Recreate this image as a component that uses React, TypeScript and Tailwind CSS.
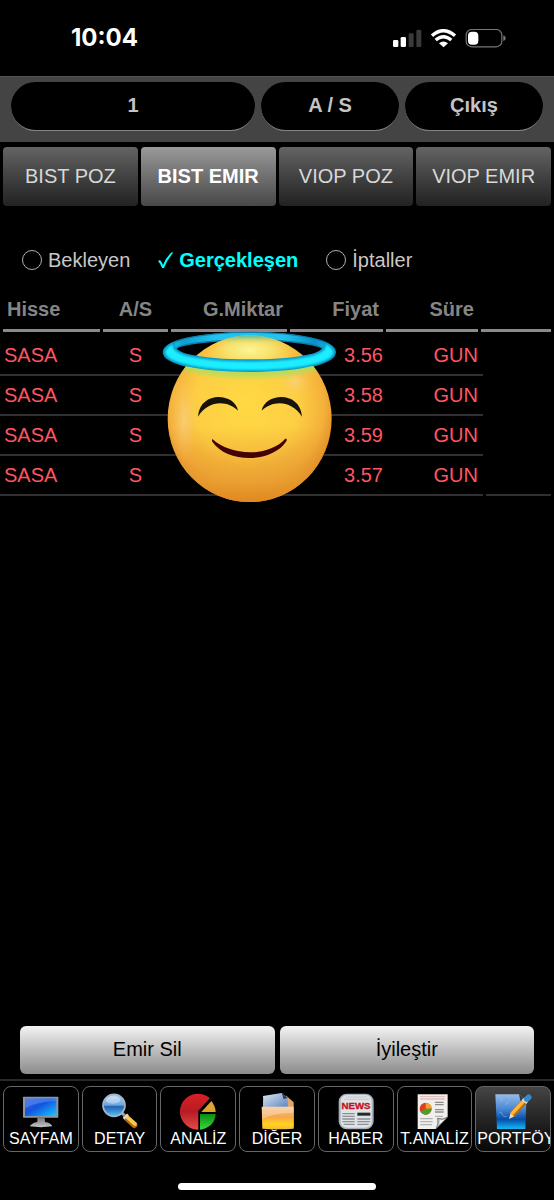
import * as React from "react"
import clsx from "clsx"

const tabs = ["BIST POZ", "BIST EMIR", "VIOP POZ", "VIOP EMIR"]
const filters = ["Bekleyen", "Gerçekleşen", "İptaller"]
const orders = [
    { hisse: "SASA", side: "S", fiyat: "3.56", sure: "GUN" },
    { hisse: "SASA", side: "S", fiyat: "3.58", sure: "GUN" },
    { hisse: "SASA", side: "S", fiyat: "3.59", sure: "GUN" },
    { hisse: "SASA", side: "S", fiyat: "3.57", sure: "GUN" },
]

function StatusIcons() {
    return (
        <svg viewBox="348 84 339 57" className="h-[19px] w-[113px]" aria-hidden="true">
            <rect x="348" y="117" width="16" height="21" rx="4" fill="#fff" />
            <rect x="371" y="108" width="16" height="30" rx="4" fill="#fff" />
            <rect x="395" y="97" width="15" height="41" rx="4" fill="#3a3a3a" />
            <rect x="418" y="86" width="15" height="52" rx="4" fill="#3a3a3a" />
            <g fill="none" stroke="#fff" strokeWidth="10">
                <path d="M465 104 Q499 74 534 104" />
                <path d="M476 117 Q499 97 523 117" />
            </g>
            <path d="M486 127 Q499 116 513 127 L499.500 139 Z" fill="#fff" />
            <rect x="567.500" y="85.500" width="107" height="52" rx="17" fill="none" stroke="#777" strokeWidth="3.500" />
            <path d="M679 103 Q686 105 686 111.500 Q686 118 679 120 Z" fill="#777" />
            <rect x="573" y="92" width="31" height="39" rx="12" fill="#fff" />
        </svg>
    )
}

function HaloFace() {
    return (
        <svg viewBox="36 30 528 522" className="absolute top-[33px] left-[162px] h-[174px] w-[176px]" aria-hidden="true">
            <defs>
                <radialGradient id="face" cx="0.48" cy="0.42" r="0.58">
                    <stop offset="0" stopColor="#ffd943" />
                    <stop offset="0.55" stopColor="#fdce43" />
                    <stop offset="0.82" stopColor="#f4b03b" />
                    <stop offset="1" stopColor="#dc8420" />
                </radialGradient>
                <linearGradient id="faceBottom" x1="0" y1="0" x2="0" y2="1">
                    <stop offset="0.55" stopColor="#e79a2e" stopOpacity="0" />
                    <stop offset="0.88" stopColor="#e79a2e" stopOpacity="0.75" />
                    <stop offset="1" stopColor="#e18a20" />
                </linearGradient>
                <radialGradient id="shine" cx="0.5" cy="0.5" r="0.5">
                    <stop offset="0" stopColor="#f8d596" stopOpacity="0.6" />
                    <stop offset="1" stopColor="#f8c468" stopOpacity="0" />
                </radialGradient>
                <radialGradient id="crown" cx="0.5" cy="0.5" r="0.5">
                    <stop offset="0" stopColor="#fdf596" />
                    <stop offset="0.5" stopColor="#f6e36e" stopOpacity="0.9" />
                    <stop offset="1" stopColor="#f8d04c" stopOpacity="0" />
                </radialGradient>
                <linearGradient id="crownTop" x1="0" y1="0" x2="0" y2="1">
                    <stop offset="0" stopColor="#38b9b8" />
                    <stop offset="1" stopColor="#e8dc6a" stopOpacity="0" />
                </linearGradient>
                <linearGradient id="ringBack" x1="0" y1="0" x2="1" y2="0">
                    <stop offset="0" stopColor="#1cd6f4" />
                    <stop offset="0.12" stopColor="#0d9fd0" />
                    <stop offset="0.3" stopColor="#22c3ee" />
                    <stop offset="0.7" stopColor="#22c3ee" />
                    <stop offset="0.88" stopColor="#0c8fc8" />
                    <stop offset="1" stopColor="#1cc6ec" />
                </linearGradient>
                <clipPath id="faceClip">
                    <ellipse cx="299" cy="296" rx="246" ry="250" />
                </clipPath>
                <filter id="glow" x="-20%" y="-80%" width="140%" height="260%">
                    <feGaussianBlur stdDeviation="8" />
                </filter>
                <filter id="softEdge" x="-5%" y="-15%" width="110%" height="130%">
                    <feGaussianBlur stdDeviation="3" />
                </filter>
            </defs>
            <path
                d="M40 97 C40 62 150 37 298 37 S556 62 556 97 S446 156 298 156 S40 132 40 97 Z M76 90 C76 106 170 118 298 118 S520 106 520 90 S420 60 298 60 S76 74 76 90 Z"
                fill="url(#ringBack)"
                fillRule="evenodd"
                stroke="#0a7cae"
                strokeWidth="4"
            />
            <ellipse cx="299" cy="296" rx="246" ry="250" fill="url(#face)" />
            <ellipse cx="299" cy="296" rx="246" ry="250" fill="url(#faceBottom)" />
            <g clipPath="url(#faceClip)">
                <ellipse cx="102" cy="300" rx="42" ry="130" fill="url(#shine)" />
                <ellipse cx="435" cy="185" rx="50" ry="45" fill="url(#shine)" />
                <ellipse cx="299" cy="90" rx="150" ry="60" fill="url(#crown)" />
                <rect x="150" y="44" width="300" height="28" fill="url(#crownTop)" />
                <path d="M70 130 Q299 190 530 130" fill="none" stroke="#b5dc5c" strokeWidth="24" filter="url(#glow)" />
            </g>
            {/* Front half of the halo */}
            <path
                d="M40 97 C40 82 56 70 80 63 C66 78 80 92 110 101 C160 113 220 118 298 118 S436 113 486 101 C516 92 530 78 516 63 C540 70 556 82 556 97 C556 132 446 156 298 156 S40 132 40 97 Z"
                fill="#0b93c4"
            />
            <path
                d="M47 97 C47 88 58 78 68 74 C66 88 76 98 106 108 C160 121 220 126 298 126 S436 121 490 108 C520 98 530 88 528 74 C538 78 549 88 549 97 C549 126 446 149 298 149 S47 126 47 97 Z"
                fill="#1aedff"
                stroke="#1aedff"
                strokeWidth="3"
                filter="url(#softEdge)"
            />
            <path d="M144 290 C150 210 255 219 264 272 C233 242 177 238 144 290 Z" fill="#17120c" />
            <path d="M456 290 C450 210 345 219 335 272 C367 242 422 238 456 290 Z" fill="#17120c" />
            <path d="M188 358 C240 407 354 413 405 357 C411 355 411 360 409 364 C366 431 230 430 187 365 C185 359 186 357 188 358 Z" fill="#430206" />
        </svg>
    )
}

const iconClass = "h-9 w-9 shrink-0 overflow-visible"

function MonitorIcon() {
    return (
        <svg viewBox="0 0 108 108" className={iconClass} aria-hidden="true">
            <defs>
                <linearGradient id="screen" x1="0" y1="0" x2="1" y2="1">
                    <stop offset="0" stopColor="#3a5fd8" />
                    <stop offset="0.45" stopColor="#1355e0" />
                    <stop offset="1" stopColor="#19c8ff" />
                </linearGradient>
                <linearGradient id="stand" x1="0" y1="0" x2="0" y2="1">
                    <stop offset="0" stopColor="#777" />
                    <stop offset="1" stopColor="#c4c4c4" />
                </linearGradient>
            </defs>
            <rect x="0" y="11" width="106" height="63" rx="2" fill="#8d959e" />
            <rect x="6" y="16" width="94" height="53" fill="url(#screen)" />
            <path d="M6 16 H100 V24 Q38 26 6 46 Z" fill="#94c1ff" opacity="0.3" />
            <path d="M43 74 H65 L66 87 Q84 89 88 100 Q54 105 20 100 Q27 89 43 87 Z" fill="url(#stand)" />
        </svg>
    )
}

function MagnifierIcon() {
    return (
        <svg viewBox="0 0 108 108" className={iconClass} aria-hidden="true">
            <defs>
                <linearGradient id="lens" x1="0" y1="0" x2="0" y2="1">
                    <stop offset="0" stopColor="#b9d8f6" />
                    <stop offset="0.48" stopColor="#6ea6de" />
                    <stop offset="0.56" stopColor="#2361b0" />
                    <stop offset="1" stopColor="#55c5f5" />
                </linearGradient>
            </defs>
            <path d="M60 60 L75 75" stroke="#aaa" strokeWidth="9" />
            <path d="M72 73 L97 96" stroke="#b56b0a" strokeWidth="18" strokeLinecap="round" />
            <path d="M74 71 L99 93" stroke="#fdc748" strokeWidth="11" strokeLinecap="round" />
            <path d="M65 77 L78 64" stroke="#d8d8d8" strokeWidth="7" />
            <circle cx="36" cy="37" r="33" fill="url(#lens)" stroke="#a4b4c8" strokeWidth="5" />
            <ellipse cx="33" cy="21" rx="22" ry="11" fill="#fff" opacity="0.35" />
        </svg>
    )
}

function PieIcon() {
    return (
        <svg viewBox="0 0 108 108" className={iconClass} aria-hidden="true">
            <defs>
                <linearGradient id="pieRed" x1="0" y1="0" x2="0" y2="1">
                    <stop offset="0" stopColor="#d92025" />
                    <stop offset="0.5" stopColor="#b51c24" />
                    <stop offset="1" stopColor="#e8494d" />
                </linearGradient>
                <linearGradient id="pieGreen" x1="0" y1="0" x2="0" y2="1">
                    <stop offset="0" stopColor="#0b8a12" />
                    <stop offset="1" stopColor="#35dc3d" />
                </linearGradient>
            </defs>
            <path d="M55 110 A54 54 0 1 1 90 16 L55 53 Z" fill="url(#pieRed)" />
            <path d="M64 57 L94 24 Q106 38 107 57 Z" fill="#dda52d" />
            <path d="M60 63 H107 Q104 103 60 110 Z" fill="url(#pieGreen)" />
        </svg>
    )
}

function FolderIcon() {
    return (
        <svg viewBox="0 0 108 108" className={iconClass} aria-hidden="true">
            <defs>
                <linearGradient id="folder" x1="0" y1="0" x2="0" y2="1">
                    <stop offset="0" stopColor="#f5c391" />
                    <stop offset="0.45" stopColor="#f8a64c" />
                    <stop offset="0.78" stopColor="#ffd51c" />
                    <stop offset="1" stopColor="#f6b640" />
                </linearGradient>
                <linearGradient id="sheet" x1="0" y1="0" x2="1" y2="1">
                    <stop offset="0" stopColor="#dce8f5" />
                    <stop offset="1" stopColor="#587fb8" />
                </linearGradient>
            </defs>
            <path d="M66 12 L82 8 L104 28 V103 H12 V22 H66 Z" fill="#e0a66d" />
            <path d="M12 9 L68 0 L86 14 V48 H14 Z" fill="url(#sheet)" />
            <path d="M68 0 L86 14 L74 19 Z" fill="#283f70" />
            <path d="M8 41 L104 41 V107 Q55 111 10 107 Z" fill="url(#folder)" />
            <path d="M9 41 L104 41 V59 Q49 59 9 78 Z" fill="#fff" opacity="0.28" />
        </svg>
    )
}

function NewsIcon() {
    return (
        <svg viewBox="0 0 108 108" className={iconClass} aria-hidden="true">
            <rect x="2" y="2" width="105" height="107" rx="24" fill="#a7b0b8" />
            <rect x="8" y="6" width="93" height="98" rx="18" fill="#dfe3e6" />
            <path d="M23 12 H88 M17 19 H94" stroke="#c4c8cb" strokeWidth="3" />
            <text x="54" y="48" textAnchor="middle" fill="#c1121e" stroke="#c1121e" fontFamily="Liberation Sans, sans-serif" fontWeight="700" fontSize="29">NEWS</text>
            <path d="M13 62 H50 M13 70 H50 M13 78 H50 M13 86 H50 M17 94 H50 M58 78 H97 M58 86 H97 M58 94 H92" stroke="#8c9195" strokeWidth="4" />
            <rect x="58" y="59" width="39" height="9" fill="#25292d" />
        </svg>
    )
}

function ReportIcon() {
    return (
        <svg viewBox="0 0 108 108" className={iconClass} aria-hidden="true">
            <path d="M5 4 H95 V72 L60 108 H5 Z" fill="#f0efed" />
            <path d="M12 11 H87 M12 18 H87" stroke="#dfc2bd" strokeWidth="4" />
            <circle cx="29" cy="47" r="18" fill="#dc3e22" />
            <path d="M29 47 V29 Q47 31 47 47 Z" fill="#f3a32b" />
            <path d="M29 47 H47 Q44 65 26 65 L13 56 Z" fill="#4c9f2b" />
            <path d="M57 28 H83 M57 35 H83 M57 50 H83 M57 57 H83" stroke="#8b8b8b" strokeWidth="4" />
            <path d="M13 77 H50 M13 86 H50 M13 95 H48 M57 70 H81" stroke="#b2b2b2" strokeWidth="4" />
            <path d="M60 108 Q69 92 65 76 Q80 82 95 72 Z" fill="#bfbfbf" stroke="#444" strokeWidth="2" />
            <path d="M69 94 Q73 89 71 82 Q79 83 87 79 Z" fill="#fff" />
        </svg>
    )
}

function NotebookIcon() {
    return (
        <svg viewBox="0 0 108 108" className={iconClass} aria-hidden="true">
            <defs>
                <linearGradient id="notebook" x1="0" y1="0" x2="0" y2="1">
                    <stop offset="0" stopColor="#9bbbe5" />
                    <stop offset="0.45" stopColor="#4284d2" />
                    <stop offset="0.72" stopColor="#064da8" />
                    <stop offset="1" stopColor="#16b7f5" />
                </linearGradient>
            </defs>
            <path d="M1 4 H72 L94 25 L91 108 H6 Z" fill="url(#notebook)" />
            <path d="M72 4 L94 25 L76 23 Z" fill="#343b46" />
            <path d="M12 61 Q18 52 22 64 T36 70 M16 24 L23 20 M31 35 L42 26" fill="none" stroke="#b9d9f7" strokeWidth="2" opacity="0.6" />
            <path d="M42 78 L47 59 L58 70 Z" fill="#f5ddb3" />
            <path d="M52 65 L88 26" stroke="#b96b12" strokeWidth="18" />
            <path d="M50 63 L86 24" stroke="#ffb735" strokeWidth="10" />
            <path d="M87 27 L93 20" stroke="#ddd" strokeWidth="18" />
            <path d="M95 18 L101 13" stroke="#328bd0" strokeWidth="17" strokeLinecap="round" />
        </svg>
    )
}

const menu = [
    { label: "SAYFAM", icon: MonitorIcon },
    { label: "DETAY", icon: MagnifierIcon },
    { label: "ANALİZ", icon: PieIcon },
    { label: "DİĞER", icon: FolderIcon },
    { label: "HABER", icon: NewsIcon },
    { label: "T.ANALİZ", icon: ReportIcon },
    { label: "PORTFÖY", icon: NotebookIcon },
]

function OrdersTable() {
    const headClass = "border-b-3 border-[#8d898a] px-1 pb-2 leading-6 h-[35px]"
    return (
        <div className="relative mt-[23px] pr-[3px]">
            <table className="w-full table-fixed border-separate border-spacing-0 text-xl">
                <colgroup>
                    <col className="w-[100px]" />
                    <col className="w-[68px]" />
                    <col className="w-[119px]" />
                    <col className="w-[96px]" />
                    <col className="w-[95px]" />
                    <col className="w-[73px]" />
                </colgroup>
                <thead className="text-[#858585]">
                    <tr>
                        <th className="p-0 pb-1 pl-[3px] text-left"><div className={headClass}>Hisse</div></th>
                        <th className="p-0 pb-1 pl-[3px] text-center"><div className={headClass}>A/S</div></th>
                        <th className="p-0 pb-1 pl-[3px] text-right"><div className={headClass}>G.Miktar</div></th>
                        <th className="p-0 pb-1 pl-[3px] text-right"><div className={headClass}>Fiyat</div></th>
                        <th className="p-0 pb-1 pl-[3px] text-right"><div className={headClass}>Süre</div></th>
                        <td className="p-0 pb-1 pl-[3px]"><div className={headClass} /></td>
                    </tr>
                </thead>
                <tbody className="text-[#ff5560]">
                    {orders.map((order, i) => (
                        <tr key={order.fiyat} className="h-10 *:border-[#303030] *:p-0">
                            <td className="border-b-2"><span className="pl-1">{order.hisse}</span></td>
                            <td className="border-b-2 text-center"><span className="pl-[3px]">{order.side}</span></td>
                            <td className="border-b-2" />
                            <td className="border-b-2 text-right">{order.fiyat}</td>
                            <td className="border-b-2 text-right">{order.sure}</td>
                            <td className="align-bottom">
                                <div className="flex gap-[3px]">
                                    <span className="w-[5px] border-b-2 border-[#303030]" />
                                    {i === orders.length - 1 && <span className="flex-1 border-b-2 border-[#303030]" />}
                                </div>
                            </td>
                        </tr>
                    ))}
                </tbody>
            </table>
            <HaloFace />
        </div>
    )
}

export default function App() {
    const [tab, setTab] = React.useState("BIST EMIR")
    const [filter, setFilter] = React.useState("Gerçekleşen")
    const pill = "h-[49px] rounded-full border-b border-[#858585] bg-black pb-0.5 text-xl font-bold text-[#c4c4c4]"
    const action = "h-12 flex-1 rounded-md bg-linear-to-b from-[#f4f4f4] to-[#8c8c8c] pb-0.5 text-xl text-black"

    return (
        <div className="flex min-h-screen flex-col overflow-hidden bg-black font-['Liberation_Sans',Arial,sans-serif]">
            {/* Status bar */}
            <div className="flex h-[76px] items-center justify-between pr-12 pl-[71px]">
                <span className="font-['Inter',sans-serif] text-2xl font-bold text-white">10:04</span>
                <StatusIcons />
            </div>

            {/* Account bar */}
            <header className="flex h-[66px] gap-1.5 border-t border-[#555] bg-[#444] px-[11px] pt-[5px]">
                <button className={clsx(pill, "flex-[244]")}>1</button>
                <button className={clsx(pill, "flex-[138]")}>A / S</button>
                <button className={clsx(pill, "flex-[138]")}>Çıkış</button>
            </header>

            <nav className="mt-[5px] grid grid-cols-4 gap-[3px] px-[3px]">
                {tabs.map((name) => (
                    <button
                        key={name}
                        onClick={() => setTab(name)}
                        className={clsx(
                            "h-[59px] rounded-sm bg-linear-to-b pb-0.5 text-xl whitespace-nowrap",
                            name === tab ? "from-[#9a9a9a] to-[#484848] font-bold text-white" : "from-[#646464] to-[#222] text-[#d8d8d8]"
                        )}
                    >
                        {name}
                    </button>
                ))}
            </nav>

            {/* Order filter */}
            <div className="mt-10 flex gap-7 pl-[22px]">
                {filters.map((name) => (
                    <label key={name} className="relative flex h-7 items-center gap-1.5 text-xl text-[#c8c8c8]">
                        <input type="radio" name="filter" checked={filter === name} onChange={() => setFilter(name)} className="peer sr-only" />
                        <span className="size-5 rounded-full border border-[#b0b0b0] peer-checked:hidden" />
                        <svg viewBox="0 0 15 18" className="hidden h-[18px] w-[15px] peer-checked:block" aria-hidden="true">
                            <path d="M0 10 L2 9 Q4 11 5 14 Q8 6 14 1 L15 2 Q9 9 6 17 L4 17 Q2 12 0 10 Z" fill="#0ff" />
                        </svg>
                        <span className="peer-checked:font-bold peer-checked:text-[#0ff]">{name}</span>
                    </label>
                ))}
            </div>

            <OrdersTable />

            <div className="mt-auto flex gap-[5px] px-5 pb-[5px]">
                <button className={action}>Emir Sil</button>
                <button className={action}>İyileştir</button>
            </div>

            <footer className="border-t-2 border-[#292929] pt-[5px]">
                <nav className="grid grid-cols-7 gap-[3px] px-[3px]">
                    {menu.map(({ label, icon: Icon }) => (
                        <a
                            key={label}
                            href="#"
                            className={clsx(
                                "flex h-[66px] min-w-0 flex-col items-center overflow-hidden rounded-lg border border-[#666] pt-1.5 text-base leading-5 whitespace-nowrap text-white",
                                label === "PORTFÖY" && "bg-linear-to-b from-[#454545] to-[#080808]"
                            )}
                        >
                            <Icon />
                            <span className="max-w-full px-px">{label}</span>
                        </a>
                    ))}
                </nav>
                <div className="mx-auto mt-[31px] mb-[10px] h-[7px] w-[198px] rounded-full bg-white" />
            </footer>
        </div>
    )
}
